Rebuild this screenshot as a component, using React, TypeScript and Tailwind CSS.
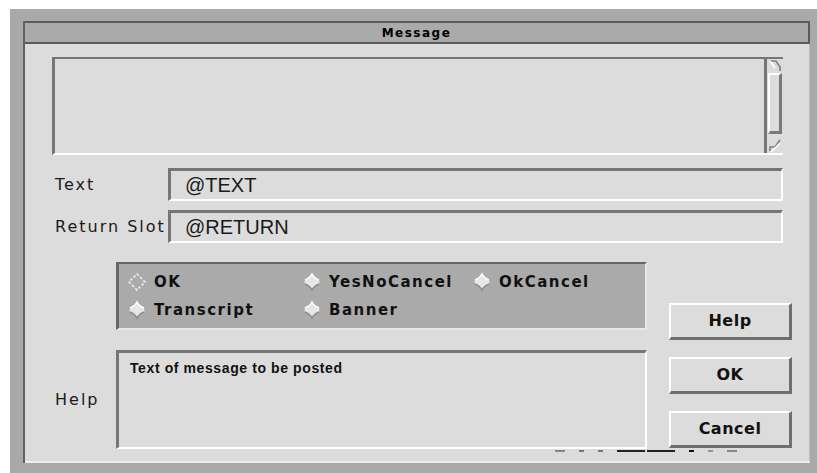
import React from 'react'

const sunken = 'border-t-[3px] border-l-[3px] border-b-2 border-r-2 border-t-[#767676] border-l-[#767676] border-b-white border-r-white'

function Diamond({ selected }: { selected?: boolean }) {
  if (selected) {
    return (
      <svg width="20" height="20" viewBox="0 0 20 20" className="shrink-0">
        <polygon points="10,2 18,10 10,18 2,10" fill="#ababab" stroke="#f0f0f0" strokeWidth="1.6" strokeDasharray="2.5 2" />
      </svg>
    )
  }
  return (
    <svg width="20" height="20" viewBox="0 0 20 20" className="shrink-0">
      <path d="M10 2 Q12 6 17 8 Q18 10 17 12 Q12 14 10 18 Q8 14 3 12 Q2 10 3 8 Q8 6 10 2 Z" fill="#e6e6e6" />
      <path d="M3 8 Q8 6 10 2 Q12 6 17 8" fill="none" stroke="#ffffff" strokeWidth="1.6" />
      <path d="M17 12 Q12 14 10 18 Q8 14 3 12" fill="none" stroke="#8c8c8c" strokeWidth="1.6" />
    </svg>
  )
}

function Radio({ label, selected }: { label: string; selected?: boolean }) {
  return (
    <div className="flex items-center gap-[7px]">
      <Diamond selected={selected} />
      <span className="text-[15px] font-bold tracking-[1.5px] text-[#111] leading-none">{label}</span>
    </div>
  )
}

function Button({ label }: { label: string }) {
  return (
    <div className="h-[37px] flex items-center justify-center bg-[#dcdcdc] border-t-2 border-l-2 border-t-white border-l-white border-b-[3px] border-r-[3px] border-b-[#6f6f6f] border-r-[#6f6f6f]">
      <span className="text-[16px] font-bold tracking-[0.5px] text-[#111]">{label}</span>
    </div>
  )
}

function Field({ label, value, top }: { label: string; value: string; top: string }) {
  return (
    <div className={`flex items-center ${top}`}>
      <div className="w-[116px] pl-[3px] text-[16px] tracking-[2px] text-[#1a1a1a]">{label}</div>
      <div className={`flex-1 h-[33px] ${sunken} flex items-center pl-[14px]`}>
        <span className="text-[20px] text-[#1a1a1a] leading-none" style={{ fontFamily: '"Liberation Sans", Arial, sans-serif' }}>
          {value}
        </span>
      </div>
    </div>
  )
}

function ScrollBar() {
  return (
    <div className="w-[19px] flex flex-col border-l-[3px] border-[#767676]">
      <svg width="16" height="14" viewBox="0 0 16 14">
        <polyline points="3,2 9,2 13,8 13,12" fill="none" stroke="#7e7e7e" strokeWidth="1.6" />
        <line x1="3" y1="2" x2="8" y2="9" stroke="#ffffff" strokeWidth="1.5" />
      </svg>
      <div className="flex-1 mx-[1px] mb-[3px] border-t-2 border-l-2 border-t-white border-l-white border-r-[3px] border-b-[3px] border-r-[#7a7a7a] border-b-[#7a7a7a]" />
      <svg width="16" height="16" viewBox="0 0 16 16">
        <polyline points="3,14 3,10 8,10 13,3" fill="none" stroke="#7e7e7e" strokeWidth="1.6" />
        <line x1="4" y1="15" x2="13" y2="6" stroke="#ffffff" strokeWidth="1.5" />
      </svg>
    </div>
  )
}

export default function App() {
  return (
    <div
      className="w-[817px] h-[473px] bg-white pt-[9px] pl-[10px] flex overflow-hidden"
      style={{ fontFamily: '"DejaVu Sans", Verdana, sans-serif' }}
    >
      <div className="flex-1 flex flex-col bg-[#a9a9a9] pt-[12px] pl-[13px] pr-[7px] pb-[10px]">
        <div className="flex-1 flex flex-col border-l-2 border-[#626262]">
          {/* title bar */}
          <div className="h-[23px] flex items-center justify-center bg-[#aaaaaa] border-y-2 border-r-2 border-[#5a5a5a]">
            <span className="text-[12px] font-bold tracking-[1.5px] text-black leading-none">Message</span>
          </div>

          <div className="flex-1 flex flex-col bg-[#dcdcdc] pl-[27px] pt-[13px] border-r border-b-2 border-r-[#bdbdbd] border-b-[#eeeeee]">
            <div className="w-[731px] flex flex-col">
              {/* message area */}
              <div className="h-[98px] flex border-t-2 border-l-[3px] border-b-2 border-t-[#767676] border-l-[#767676] border-b-white">
                <div className="flex-1" />
                <ScrollBar />
              </div>

              <Field label="Text" value="@TEXT" top="mt-[13px]" />
              <Field label="Return Slot" value="@RETURN" top="mt-[9px]" />

              <div className="flex w-[740px] shrink-0 mt-[19px]">
                <div className="w-[595px] shrink-0 flex flex-col">
                  {/* dialog type choices */}
                  <div className="ml-[64px] h-[68px] bg-[#aaaaaa] border-t-2 border-l-[3px] border-b-2 border-r-2 border-t-[#666] border-l-[#666] border-b-[#e8e8e8] border-r-[#e8e8e8] grid grid-cols-[175px_170px_1fr] content-center gap-y-[8px] pl-[8px]">
                    <Radio label="OK" selected />
                    <Radio label="YesNoCancel" />
                    <Radio label="OkCancel" />
                    <Radio label="Transcript" />
                    <Radio label="Banner" />
                  </div>

                  <div className="flex mt-[20px]">
                    <div className="w-[64px] flex items-center pl-[3px] text-[16px] tracking-[2px] text-[#1a1a1a]">Help</div>
                    <div className={`flex-1 h-[99px] ${sunken} pl-[11px] pt-[3px]`}>
                      <span
                        className="text-[14px] font-bold tracking-[0.6px] text-[#111] leading-none"
                        style={{ fontFamily: '"Liberation Sans", Arial, sans-serif' }}
                      >
                        Text of message to be posted
                      </span>
                    </div>
                  </div>
                </div>

                <div className="ml-[22px] w-[123px] shrink-0 pt-[41px] flex flex-col gap-[17px]">
                  <Button label="Help" />
                  <Button label="OK" />
                  <Button label="Cancel" />
                </div>
              </div>
            </div>

            {/* dotted rule along the bottom edge */}
            <div className="flex items-center mt-[1px] ml-[503px] h-[2px] gap-[14px]">
              <span className="w-[10px] h-[2px] bg-[#888]" />
              <span className="w-[5px] h-[2px] bg-[#777]" />
              <span className="w-[5px] h-[2px] bg-[#777]" />
              <span className="w-[28px] h-[2px] bg-[#222]" />
              <span className="w-[28px] h-[2px] bg-[#222] -ml-[12px]" />
              <span className="w-[5px] h-[2px] bg-[#111]" />
              <span className="w-[5px] h-[2px] bg-[#999]" />
              <span className="w-[10px] h-[2px] bg-[#888]" />
            </div>
          </div>
        </div>
      </div>
    </div>
  )
}
